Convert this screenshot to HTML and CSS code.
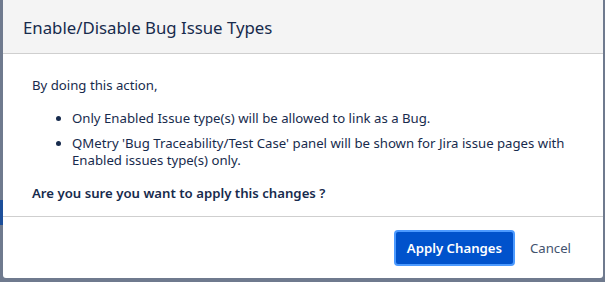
FILE: index.html
```html
<!DOCTYPE html>
<html>
<head>
<meta charset="utf-8">
<link rel="stylesheet" href="styles.css">
</head>
<body>
<div class="backdrop">
  <div class="behind"></div>
  <div class="dialog">
    <div class="header">
      <h2 class="title">Enable/Disable Bug Issue Types</h2>
    </div>
    <div class="content">
      <p class="intro">By doing this action,</p>
      <ul class="list">
        <li>Only Enabled Issue type(s) will be allowed to link as a Bug.</li>
        <li>QMetry 'Bug Traceability/Test Case' panel will be shown for Jira issue pages with Enabled issues type(s) only.</li>
      </ul>
      <p class="confirm">Are you sure you want to apply this changes ?</p>
    </div>
    <div class="footer">
      <button class="btn-primary">Apply Changes</button>
      <button class="btn-link">Cancel</button>
    </div>
  </div>
</div>
</body>
</html>
```
FILE: styles.css
```css
html, body {
  margin: 0;
  padding: 0;
}
body {
  width: 605px;
  height: 282px;
  overflow: hidden;
  background: #6f7a8e;
  font-family: "Noto Sans", "Open Sans", sans-serif;
  color: #172b4d;
}
.backdrop {
  position: relative;
  height: 282px;
}
.behind {
  position: absolute;
  left: 0;
  top: 200px;
  width: 3px;
  height: 25px;
  background: #1d4f9a;
}
.dialog {
  position: absolute;
  left: 3px;
  top: 0;
  width: 600px;
  height: 278px;
  background: #fff;
  border-radius: 0 0 3px 3px;
  display: flex;
  flex-direction: column;
  overflow: hidden;
}
.header {
  height: 54px;
  background: #f4f4f4;
  border-bottom: 1px solid #cfcfcf;
  display: flex;
  align-items: center;
  padding-left: 20px;
  padding-top: 2px;
  box-sizing: border-box;
}
.title {
  margin: 0;
  font-size: 16.8px;
  font-weight: 400;
  color: #172b4d;
  line-height: 24px;
}
.content {
  padding: 23px 15px 0 29px;
  font-size: 13.2px;
  line-height: 17px;
  height: 163px;
  box-sizing: border-box;
  border-bottom: 1px solid #cfcfcf;
}
.intro {
  margin: 0;
}
.list {
  margin: 16px 0 0 0;
  padding-left: 40px;
}
.list li {
  margin-bottom: 8px;
}
.confirm {
  margin: 16px 0 0 0;
  font-weight: 600;
}
.footer {
  flex: 1;
  display: flex;
  align-items: center;
  justify-content: flex-end;
  padding-right: 26px;
  gap: 9px;
}
.btn-primary {
  font-family: inherit;
  font-size: 13.2px;
  font-weight: 600;
  color: #fff;
  background: #0052cc;
  border: 2px solid #4c9aff;
  border-radius: 4px;
  height: 36px;
  width: 121px;
  padding: 0;
  cursor: pointer;
}
.btn-link {
  font-family: inherit;
  font-size: 13.2px;
  color: #42526e;
  background: none;
  border: none;
  padding: 0 6px;
  height: 36px;
}
```
